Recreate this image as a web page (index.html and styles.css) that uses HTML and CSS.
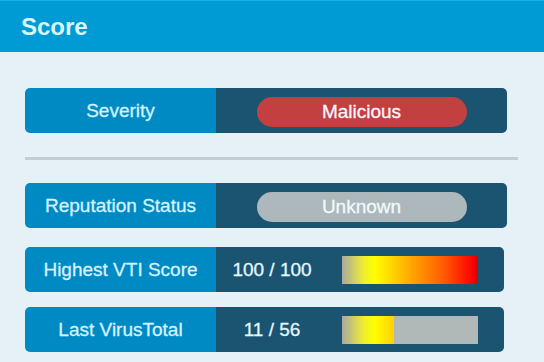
FILE: index.html
```html
<!DOCTYPE html>
<html>
<head>
<meta charset="utf-8">
<link rel="stylesheet" href="styles.css">
</head>
<body>
<div class="panel">
  <div class="header">Score</div>
  <div class="content">
    <div class="row row-wide first">
      <div class="label">Severity</div>
      <div class="value"><span class="pill pill-red">Malicious</span></div>
    </div>
    <div class="divider"></div>
    <div class="row row-wide second">
      <div class="label">Reputation Status</div>
      <div class="value"><span class="pill pill-gray">Unknown</span></div>
    </div>
    <div class="row row-narrow third">
      <div class="label">Highest VTI Score</div>
      <div class="value value-bar">
        <span class="num">100 / 100</span>
        <div class="bar"><div class="fill" style="width:136px"></div></div>
      </div>
    </div>
    <div class="row row-narrow fourth">
      <div class="label">Last VirusTotal</div>
      <div class="value value-bar">
        <span class="num">11 / 56</span>
        <div class="bar"><div class="fill" style="width:52px"></div></div>
      </div>
    </div>
  </div>
</div>
</body>
</html>
```
FILE: styles.css
```css
html, body {
  margin: 0;
  padding: 0;
  background: #e5f0f7;
  font-family: "Liberation Sans", Arial, sans-serif;
}
.panel {
  width: 544px;
  height: 362px;
  overflow: hidden;
}
.header {
  height: 51px;
  border-top: 1px solid #12b2e6;
  background: #009bd5;
  color: #dcf6ff;
  font-weight: bold;
  font-size: 24px;
  line-height: 51px;
  padding-left: 21px;
  box-sizing: content-box;
}
.content {
  padding: 36px 0 0 25px;
}
.row {
  display: flex;
  height: 45px;
  border-radius: 5px;
  overflow: hidden;
  font-size: 19px;
  -webkit-text-stroke: 0.3px currentColor;
}
.row-wide { width: 482px; }
.row-narrow { width: 479px; }
.second { margin-top: 23px; }
.third { margin-top: 19px; }
.fourth { margin-top: 15px; }
.label {
  width: 191px;
  flex: none;
  background: #008ac3;
  color: #d6f3ff;
  display: flex;
  align-items: center;
  justify-content: center;
}
.value {
  flex: 1;
  background: #1a5470;
  display: flex;
  align-items: center;
  justify-content: center;
}
.pill {
  width: 210px;
  height: 30px;
  border-radius: 15px;
  display: flex;
  align-items: center;
  justify-content: center;
  color: #fbf6ff;
  margin-top: 3px;
}
.pill-red { background: #c24040; }
.pill-gray { background: #acb8bc; color: #f2f8fa; }
.divider {
  width: 493px;
  height: 3px;
  background: #c3cdd3;
  margin-top: 24px;
}
.value-bar {
  justify-content: flex-start;
}
.num {
  width: 112px;
  text-align: center;
  color: #e4f7ff;
}
.bar {
  width: 136px;
  height: 28px;
  margin-left: 14px;
  background: #b1b8b8;
  display: flex;
}
.fill {
  height: 28px;
  background: linear-gradient(to right, #a8a8a2 0%, #f0ee30 16%, #ffff00 24%, #ffb000 48%, #ff5a00 75%, #ff0000 96%, #d00000 100%);
  background-size: 136px 28px;
  background-repeat: no-repeat;
}
```
